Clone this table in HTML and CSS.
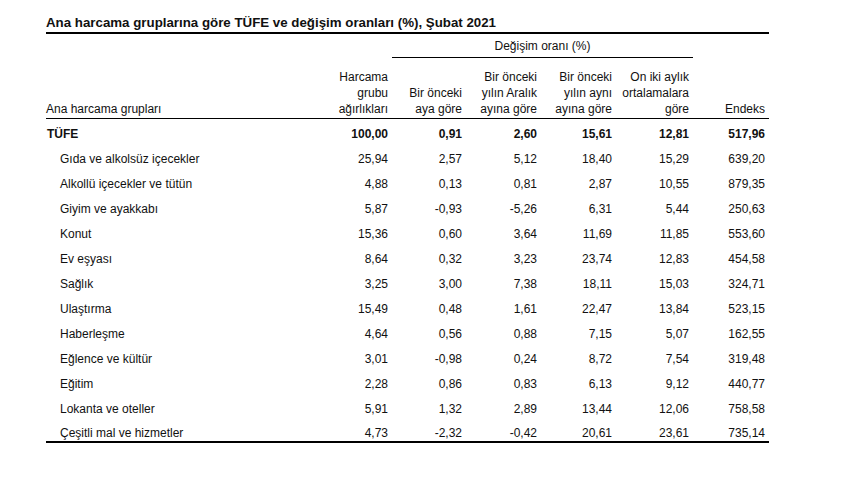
FILE: index.html
```html
<!DOCTYPE html>
<html lang="tr">
<head>
<meta charset="utf-8">
<title>TÜFE</title>
<link rel="stylesheet" href="styles.css">
</head>
<body>
<div class="page">
  <div class="title">Ana harcama gruplarına göre TÜFE ve değişim oranları (%), Şubat 2021</div>
  <table class="tbl">
    <colgroup>
      <col class="c-label"><col class="c-w"><col class="c-a"><col class="c-b"><col class="c-c"><col class="c-d"><col class="c-e">
    </colgroup>
    <thead>
      <tr class="group-row">
        <th></th><th></th>
        <th colspan="4" class="group">Değişim oranı (%)</th>
        <th></th>
      </tr>
      <tr class="head-row">
        <th class="lbl">Ana harcama grupları</th>
        <th>Harcama<br>grubu<br>ağırlıkları</th>
        <th>Bir önceki<br>aya göre</th>
        <th>Bir önceki<br>yılın Aralık<br>ayına göre</th>
        <th>Bir önceki<br>yılın aynı<br>ayına göre</th>
        <th>On iki aylık<br>ortalamalara<br>göre</th>
        <th>Endeks</th>
      </tr>
    </thead>
    <tbody>
      <tr class="total"><td class="lbl">TÜFE</td><td>100,00</td><td>0,91</td><td>2,60</td><td>15,61</td><td>12,81</td><td>517,96</td></tr>
      <tr><td class="lbl sub">Gıda ve alkolsüz içecekler</td><td>25,94</td><td>2,57</td><td>5,12</td><td>18,40</td><td>15,29</td><td>639,20</td></tr>
      <tr><td class="lbl sub">Alkollü içecekler ve tütün</td><td>4,88</td><td>0,13</td><td>0,81</td><td>2,87</td><td>10,55</td><td>879,35</td></tr>
      <tr><td class="lbl sub">Giyim ve ayakkabı</td><td>5,87</td><td>-0,93</td><td>-5,26</td><td>6,31</td><td>5,44</td><td>250,63</td></tr>
      <tr><td class="lbl sub">Konut</td><td>15,36</td><td>0,60</td><td>3,64</td><td>11,69</td><td>11,85</td><td>553,60</td></tr>
      <tr><td class="lbl sub">Ev eşyası</td><td>8,64</td><td>0,32</td><td>3,23</td><td>23,74</td><td>12,83</td><td>454,58</td></tr>
      <tr><td class="lbl sub">Sağlık</td><td>3,25</td><td>3,00</td><td>7,38</td><td>18,11</td><td>15,03</td><td>324,71</td></tr>
      <tr><td class="lbl sub">Ulaştırma</td><td>15,49</td><td>0,48</td><td>1,61</td><td>22,47</td><td>13,84</td><td>523,15</td></tr>
      <tr><td class="lbl sub">Haberleşme</td><td>4,64</td><td>0,56</td><td>0,88</td><td>7,15</td><td>5,07</td><td>162,55</td></tr>
      <tr><td class="lbl sub">Eğlence ve kültür</td><td>3,01</td><td>-0,98</td><td>0,24</td><td>8,72</td><td>7,54</td><td>319,48</td></tr>
      <tr><td class="lbl sub">Eğitim</td><td>2,28</td><td>0,86</td><td>0,83</td><td>6,13</td><td>9,12</td><td>440,77</td></tr>
      <tr><td class="lbl sub">Lokanta ve oteller</td><td>5,91</td><td>1,32</td><td>2,89</td><td>13,44</td><td>12,06</td><td>758,58</td></tr>
      <tr class="last"><td class="lbl sub">Çeşitli mal ve hizmetler</td><td>4,73</td><td>-2,32</td><td>-0,42</td><td>20,61</td><td>23,61</td><td>735,14</td></tr>
    </tbody>
  </table>
</div>
</body>
</html>
```

FILE: styles.css
```css
html, body {
  margin: 0;
  padding: 0;
  background: #ffffff;
}

body {
  font-family: "Liberation Sans", Arial, sans-serif;
  color: #111111;
}

.page {
  padding: 15px 0 0 46px;
}

.title {
  width: 723px;
  font-size: 13.3px;
  font-weight: bold;
  line-height: 16px;
  padding-bottom: 1px;
  border-bottom: 2px solid #000;
}

.tbl {
  width: 723px;
  border-collapse: collapse;
  table-layout: fixed;
  font-size: 12px;
}

.c-label { width: 272px; }
.c-w { width: 74px; }
.c-a { width: 74px; }
.c-b { width: 75px; }
.c-c { width: 75px; }
.c-d { width: 77px; }
.c-e { width: 76px; }

.tbl th,
.tbl td {
  padding: 0 4px 0 0;
  text-align: right;
  font-weight: normal;
}

.group-row th {
  height: 18px;
  padding-top: 5px;
  line-height: 14px;
  vertical-align: top;
}

.group-row th.group {
  text-align: center;
  border-bottom: 1px solid #000;
  padding-right: 0;
}

.head-row th {
  vertical-align: bottom;
  line-height: 16px;
  padding-bottom: 1px;
  padding-top: 11px;
  border-bottom: 1px solid #000;
}

.tbl .lbl {
  text-align: left;
}

.tbl td {
  height: 25px;
  line-height: 14px;
  vertical-align: bottom;
  padding-bottom: 3px;
  box-sizing: border-box;
}

.tbl td.lbl {
  padding-left: 1px;
}

.tbl td.sub {
  padding-left: 14px;
}

.total td {
  font-weight: bold;
}

.last td {
  height: 23px;
  padding-bottom: 1px;
  border-bottom: 2px solid #000;
}
```
